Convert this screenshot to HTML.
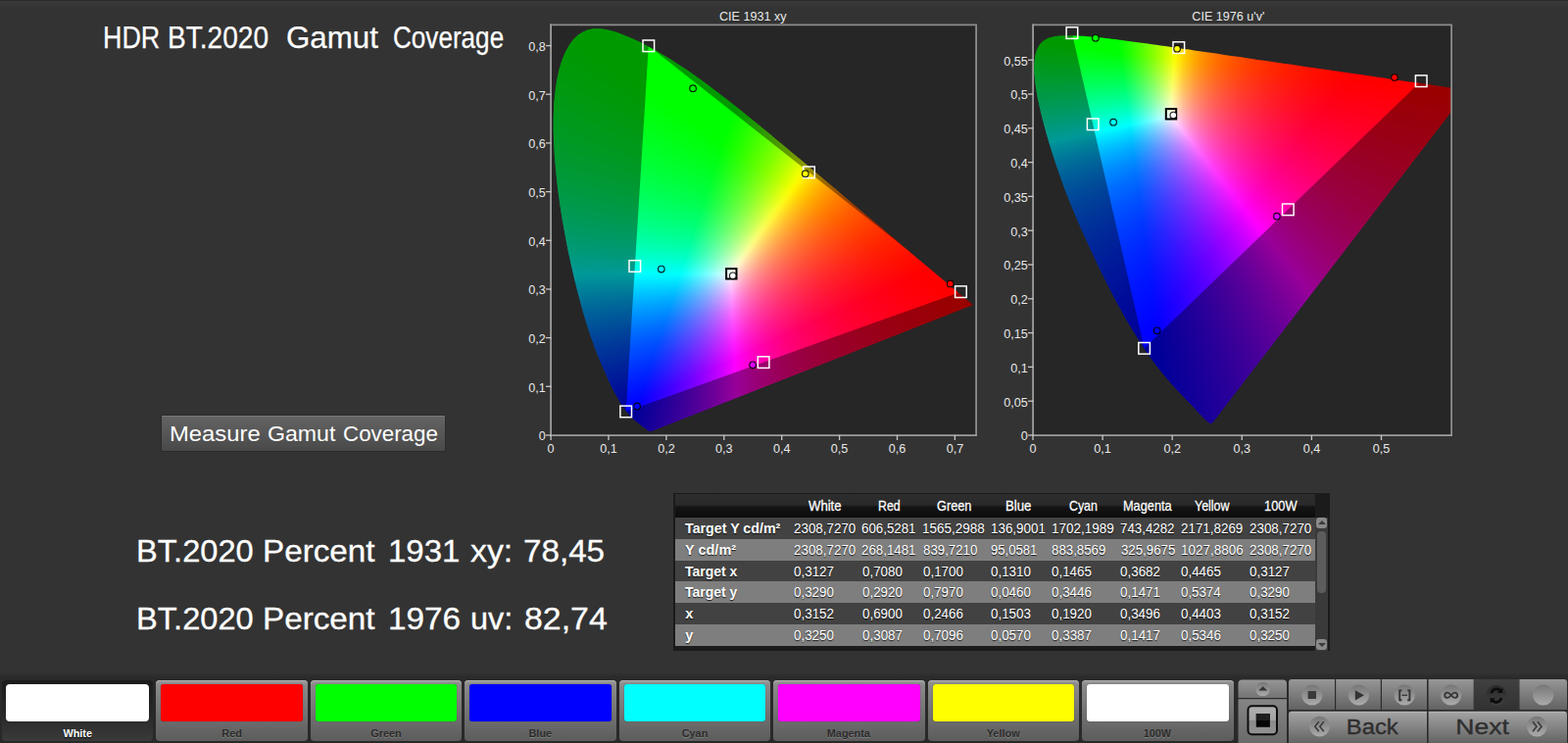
<!DOCTYPE html>
<html><head><meta charset="utf-8"><title>HDR BT.2020 Gamut Coverage</title>
<style>
html,body{margin:0;padding:0;background:#333}
body{width:1600px;height:758px;position:relative;overflow:hidden;font-family:"Liberation Sans",sans-serif;color:#fff}
.t{position:absolute;white-space:pre;line-height:1;transform-origin:0 0}
.sh{text-shadow:0 1px 1px rgba(0,0,0,.8)}
#topline{position:absolute;left:0;top:0;width:1600px;height:7px;background:linear-gradient(#2b2b2b 0,#2b2b2b 1.3px,#383838 1.4px,#363636 6px,#333 7px)}
#c1{position:absolute;left:563px;top:26px;width:433px;height:418px;overflow:hidden;background:#262626}
#c1 .fill{position:absolute;left:0;top:0;width:433px;height:418px;clip-path:polygon(101.4px 414.1px,99.9px 414.1px,98.4px 413.2px,95.8px 411.2px,95.3px 410.9px,94.9px 410.5px,94.4px 410.2px,93.8px 409.8px,93.2px 409.3px,92.6px 408.9px,91.9px 408.4px,91.2px 407.8px,90.4px 407.3px,89.6px 406.7px,88.8px 406.0px,87.9px 405.3px,87.0px 404.6px,86.0px 403.7px,84.9px 402.8px,83.8px 401.9px,82.7px 400.8px,81.5px 399.7px,80.2px 398.4px,78.8px 396.8px,77.3px 395.0px,75.7px 393.0px,74.0px 390.6px,72.2px 387.9px,70.2px 385.0px,68.2px 381.6px,66.0px 377.8px,63.7px 373.6px,61.2px 368.8px,58.6px 363.4px,55.9px 357.4px,53.0px 350.8px,49.8px 343.5px,46.5px 335.5px,43.2px 326.7px,39.7px 317.1px,36.3px 306.7px,32.9px 295.4px,29.5px 283.3px,26.1px 270.4px,22.7px 256.7px,19.4px 242.3px,16.2px 227.3px,13.3px 212.0px,10.5px 196.5px,8.1px 180.8px,6.0px 165.2px,4.3px 149.7px,3.0px 134.6px,2.1px 119.9px,1.7px 105.7px,1.8px 92.0px,2.4px 79.0px,3.6px 66.7px,5.3px 55.2px,7.6px 44.7px,10.5px 35.3px,14.0px 27.0px,17.9px 19.9px,22.3px 14.1px,27.0px 9.6px,32.1px 6.4px,37.5px 4.3px,43.0px 3.3px,48.7px 3.2px,54.5px 3.9px,60.4px 5.2px,66.4px 7.1px,72.3px 9.2px,78.3px 11.7px,84.2px 14.3px,90.1px 17.1px,95.8px 20.0px,101.4px 23.0px,107.0px 26.0px,112.4px 29.2px,117.9px 32.4px,123.2px 35.7px,128.6px 39.2px,133.9px 42.7px,139.3px 46.3px,144.6px 50.0px,149.8px 53.7px,155.1px 57.6px,160.4px 61.5px,165.6px 65.4px,170.9px 69.4px,176.1px 73.4px,181.3px 77.5px,186.5px 81.6px,191.8px 85.8px,197.0px 90.0px,202.2px 94.2px,207.5px 98.5px,212.7px 102.7px,218.0px 107.0px,223.2px 111.3px,228.4px 115.7px,233.6px 120.0px,238.8px 124.3px,244.0px 128.7px,249.2px 133.0px,254.4px 137.3px,259.5px 141.6px,264.6px 145.9px,269.7px 150.2px,274.8px 154.5px,279.8px 158.7px,284.8px 163.0px,289.8px 167.1px,294.7px 171.3px,299.6px 175.4px,304.4px 179.5px,309.1px 183.5px,313.8px 187.4px,318.5px 191.4px,323.0px 195.2px,327.5px 199.0px,332.0px 202.7px,336.3px 206.3px,340.5px 209.9px,344.6px 213.4px,348.6px 216.8px,352.5px 220.1px,356.2px 223.2px,359.8px 226.2px,363.3px 229.1px,366.6px 232.0px,369.9px 234.7px,373.0px 237.4px,376.1px 240.0px,379.0px 242.4px,381.8px 244.7px,384.4px 246.9px,386.9px 249.0px,389.3px 251.0px,391.6px 252.9px,393.7px 254.8px,395.8px 256.5px,397.7px 258.1px,399.5px 259.7px,401.2px 261.1px,402.8px 262.5px,404.4px 263.8px,405.8px 265.0px,407.2px 266.1px,408.5px 267.2px,409.7px 268.2px,410.9px 269.2px,411.9px 270.1px,413.0px 271.0px,414.0px 271.9px,414.9px 272.7px,415.8px 273.4px,416.7px 274.2px,417.5px 274.9px,418.3px 275.6px,419.1px 276.2px,419.8px 276.8px,420.5px 277.4px,424.6px 280.8px,426.9px 282.8px,429.7px 285.1px);background:conic-gradient(from 0deg at 374.22px 253.02px,#ffff00 0deg,#ffff00 64deg,#ff0000 65deg,#ff0000 123deg,#ff00ff 124deg,#ff00ff 245deg,#ff07ff 246deg,#ff0eff 247deg,#ff16ff 248deg,#ff1dff 249deg,#ff25ff 250deg,#ff2dff 251deg,#ff35ff 252deg,#ff3dff 253deg,#ff46ff 254deg,#ff4eff 255deg,#ff57ff 256deg,#ff61ff 257deg,#ff6aff 258deg,#ff74ff 259deg,#ff7fff 260deg,#ff8aff 261deg,#ff95ff 262deg,#ffa0ff 263deg,#ffacff 264deg,#ffb9ff 265deg,#ffc6ff 266deg,#ffd4ff 267deg,#ffe2ff 268deg,#fff2ff 269deg,#fffffd 270deg,#ffffed 271deg,#ffffdf 272deg,#ffffd1 273deg,#ffffc5 274deg,#ffffb9 275deg,#ffffae 276deg,#ffffa3 277deg,#ffff9a 278deg,#ffff90 279deg,#ffff87 280deg,#ffff7f 281deg,#ffff77 282deg,#ffff6f 283deg,#ffff68 284deg,#ffff61 285deg,#ffff5a 286deg,#ffff53 287deg,#ffff4d 288deg,#ffff47 289deg,#ffff41 290deg,#ffff3b 291deg,#ffff36 292deg,#ffff31 293deg,#ffff2c 294deg,#ffff27 295deg,#ffff22 296deg,#ffff1d 297deg,#ffff19 298deg,#ffff14 299deg,#ffff10 300deg,#ffff0c 301deg,#ffff08 302deg,#ffff04 303deg,#ffff00 304deg,#ffff00 360deg),conic-gradient(from 0deg at 175.15px 119.18px,#00ff00 0deg,#00ff00 18deg,#ffff00 19deg,#ffff00 124deg,#ffff02 125deg,#ffff04 126deg,#ffff07 127deg,#ffff09 128deg,#ffff0b 129deg,#ffff0d 130deg,#ffff10 131deg,#ffff12 132deg,#ffff14 133deg,#ffff17 134deg,#ffff19 135deg,#ffff1c 136deg,#ffff1e 137deg,#ffff21 138deg,#ffff23 139deg,#ffff26 140deg,#ffff29 141deg,#ffff2b 142deg,#ffff2e 143deg,#ffff31 144deg,#ffff34 145deg,#ffff37 146deg,#ffff3b 147deg,#ffff3e 148deg,#ffff41 149deg,#ffff45 150deg,#ffff48 151deg,#ffff4c 152deg,#ffff50 153deg,#ffff54 154deg,#ffff58 155deg,#ffff5c 156deg,#ffff60 157deg,#ffff65 158deg,#ffff6a 159deg,#ffff6f 160deg,#ffff74 161deg,#ffff7a 162deg,#ffff7f 163deg,#ffff85 164deg,#ffff8c 165deg,#ffff92 166deg,#ffff99 167deg,#ffffa1 168deg,#ffffa9 169deg,#ffffb1 170deg,#ffffbb 171deg,#ffffc4 172deg,#ffffcf 173deg,#ffffda 174deg,#ffffe6 175deg,#fffff3 176deg,#fdffff 177deg,#eeffff 178deg,#e0ffff 179deg,#d2ffff 180deg,#c5ffff 181deg,#b7ffff 182deg,#abffff 183deg,#9effff 184deg,#91ffff 185deg,#85ffff 186deg,#79ffff 187deg,#6effff 188deg,#62ffff 189deg,#57ffff 190deg,#4cffff 191deg,#41ffff 192deg,#36ffff 193deg,#2bffff 194deg,#21ffff 195deg,#16ffff 196deg,#0cffff 197deg,#02ffff 198deg,#00ffff 199deg,#00ffff 303deg,#00ff00 304deg,#00ff00 360deg),conic-gradient(from 0deg at 87.33px 386.86px,#00ffff 0deg,#00ffff 18deg,#09ffff 19deg,#13ffff 20deg,#1effff 21deg,#29ffff 22deg,#35ffff 23deg,#41ffff 24deg,#4effff 25deg,#5bffff 26deg,#69ffff 27deg,#77ffff 28deg,#86ffff 29deg,#96ffff 30deg,#a7ffff 31deg,#b8ffff 32deg,#cbffff 33deg,#deffff 34deg,#f3ffff 35deg,#fff5ff 36deg,#ffe1ff 37deg,#ffcfff 38deg,#ffbfff 39deg,#ffb0ff 40deg,#ffa2ff 41deg,#ff96ff 42deg,#ff8aff 43deg,#ff7fff 44deg,#ff75ff 45deg,#ff6cff 46deg,#ff63ff 47deg,#ff5bff 48deg,#ff53ff 49deg,#ff4cff 50deg,#ff45ff 51deg,#ff3fff 52deg,#ff38ff 53deg,#ff32ff 54deg,#ff2dff 55deg,#ff27ff 56deg,#ff22ff 57deg,#ff1dff 58deg,#ff19ff 59deg,#ff14ff 60deg,#ff10ff 61deg,#ff0cff 62deg,#ff08ff 63deg,#ff04ff 64deg,#ff00ff 65deg,#ff00ff 198deg,#0000ff 199deg,#0000ff 244deg,#00ffff 245deg,#00ffff 360deg);background-blend-mode:darken,darken,normal}
#c2{position:absolute;left:1055px;top:26px;width:426px;height:418px;overflow:hidden;background:#262626}
#c2 .fill{position:absolute;left:0;top:0;width:426px;height:418px;clip-path:polygon(181.9px 405.7px,178.7px 405.5px,174.3px 401.5px,166.2px 392.9px,164.9px 391.6px,163.5px 390.1px,162.1px 388.6px,160.5px 386.9px,158.8px 385.1px,156.9px 383.2px,155.0px 381.2px,153.0px 379.1px,150.9px 376.9px,148.7px 374.6px,146.4px 372.2px,143.9px 369.5px,141.3px 366.6px,138.6px 363.6px,135.7px 360.3px,132.8px 356.8px,129.8px 353.1px,126.6px 349.1px,123.2px 344.7px,119.5px 339.6px,115.4px 333.8px,111.1px 327.4px,106.6px 320.2px,101.8px 312.5px,96.8px 304.2px,91.6px 295.3px,86.3px 285.7px,80.9px 275.5px,75.3px 264.7px,69.6px 253.3px,63.9px 241.5px,58.2px 229.4px,52.5px 217.1px,46.9px 204.6px,41.5px 192.1px,36.4px 179.6px,31.6px 167.2px,27.2px 155.1px,23.1px 143.2px,19.3px 131.8px,15.9px 120.8px,12.8px 110.4px,10.1px 100.6px,7.8px 91.5px,5.8px 83.0px,4.1px 75.2px,2.8px 68.0px,1.8px 61.5px,1.0px 55.5px,0.5px 50.1px,0.3px 45.1px,0.3px 40.6px,0.6px 36.5px,1.0px 32.7px,1.7px 29.3px,2.6px 26.3px,3.7px 23.6px,5.0px 21.1px,6.4px 19.0px,8.0px 17.2px,9.8px 15.7px,11.7px 14.4px,13.6px 13.4px,15.7px 12.5px,17.9px 11.9px,20.2px 11.4px,22.5px 11.1px,24.9px 10.8px,27.4px 10.6px,29.9px 10.5px,32.4px 10.4px,34.9px 10.4px,37.4px 10.4px,40.0px 10.4px,42.5px 10.5px,45.1px 10.6px,47.6px 10.7px,50.3px 10.8px,52.9px 11.0px,55.6px 11.2px,58.4px 11.4px,61.2px 11.7px,64.1px 11.9px,67.1px 12.2px,70.1px 12.6px,73.1px 12.9px,76.2px 13.3px,79.5px 13.7px,82.7px 14.1px,86.1px 14.5px,89.5px 14.9px,93.1px 15.4px,96.7px 15.9px,100.4px 16.4px,104.3px 16.9px,108.2px 17.4px,112.2px 18.0px,116.3px 18.6px,120.6px 19.2px,124.9px 19.8px,129.3px 20.4px,133.9px 21.1px,138.6px 21.8px,143.4px 22.5px,148.3px 23.2px,153.3px 23.9px,158.5px 24.6px,163.7px 25.4px,169.1px 26.2px,174.6px 27.0px,180.2px 27.8px,185.9px 28.6px,191.7px 29.5px,197.6px 30.4px,203.7px 31.2px,209.8px 32.1px,216.0px 33.0px,222.3px 33.9px,228.6px 34.9px,235.1px 35.8px,241.6px 36.8px,248.1px 37.7px,254.6px 38.7px,261.1px 39.6px,267.4px 40.5px,273.8px 41.5px,280.0px 42.4px,286.3px 43.3px,292.5px 44.2px,298.7px 45.1px,304.8px 46.0px,310.8px 46.8px,316.6px 47.7px,322.2px 48.5px,327.7px 49.3px,333.0px 50.1px,338.1px 50.8px,343.1px 51.5px,348.0px 52.2px,352.6px 52.9px,357.1px 53.6px,361.3px 54.2px,365.4px 54.8px,369.3px 55.4px,373.0px 55.9px,376.6px 56.4px,380.0px 56.9px,383.3px 57.4px,386.4px 57.8px,389.4px 58.3px,392.3px 58.7px,395.1px 59.1px,397.8px 59.5px,400.4px 59.9px,402.9px 60.3px,405.3px 60.6px,407.6px 61.0px,409.8px 61.3px,411.9px 61.6px,414.0px 61.9px,426.4px 63.7px,433.8px 64.7px,442.7px 66.0px);background:conic-gradient(from 0deg at 319.84px 54.68px,#ffff00 0deg,#ffff00 37deg,#ff0000 38deg,#ff0000 96deg,#ff00ff 97deg,#ff00ff 217deg,#ff01ff 218deg,#ff03ff 219deg,#ff06ff 220deg,#ff09ff 221deg,#ff0bff 222deg,#ff0eff 223deg,#ff11ff 224deg,#ff14ff 225deg,#ff17ff 226deg,#ff1bff 227deg,#ff1eff 228deg,#ff21ff 229deg,#ff25ff 230deg,#ff28ff 231deg,#ff2cff 232deg,#ff30ff 233deg,#ff34ff 234deg,#ff38ff 235deg,#ff3cff 236deg,#ff41ff 237deg,#ff46ff 238deg,#ff4bff 239deg,#ff50ff 240deg,#ff55ff 241deg,#ff5bff 242deg,#ff61ff 243deg,#ff67ff 244deg,#ff6dff 245deg,#ff74ff 246deg,#ff7cff 247deg,#ff84ff 248deg,#ff8cff 249deg,#ff95ff 250deg,#ff9fff 251deg,#ffa9ff 252deg,#ffb4ff 253deg,#ffc0ff 254deg,#ffcdff 255deg,#ffdcff 256deg,#ffebff 257deg,#fffdff 258deg,#ffffef 259deg,#ffffde 260deg,#ffffcd 261deg,#ffffbd 262deg,#ffffad 263deg,#ffff9e 264deg,#ffff8f 265deg,#ffff81 266deg,#ffff74 267deg,#ffff66 268deg,#ffff59 269deg,#ffff4d 270deg,#ffff41 271deg,#ffff35 272deg,#ffff29 273deg,#ffff1e 274deg,#ffff13 275deg,#ffff08 276deg,#ffff00 277deg,#ffff00 360deg),conic-gradient(from 0deg at 88.20px 27.22px,#ffff00 0deg,#ffff00 96deg,#ffff01 97deg,#ffff04 98deg,#ffff08 99deg,#ffff0b 100deg,#ffff0f 101deg,#ffff12 102deg,#ffff16 103deg,#ffff19 104deg,#ffff1d 105deg,#ffff21 106deg,#ffff24 107deg,#ffff28 108deg,#ffff2c 109deg,#ffff30 110deg,#ffff34 111deg,#ffff38 112deg,#ffff3d 113deg,#ffff41 114deg,#ffff45 115deg,#ffff4a 116deg,#ffff4e 117deg,#ffff53 118deg,#ffff58 119deg,#ffff5d 120deg,#ffff62 121deg,#ffff67 122deg,#ffff6c 123deg,#ffff72 124deg,#ffff78 125deg,#ffff7e 126deg,#ffff84 127deg,#ffff8a 128deg,#ffff90 129deg,#ffff97 130deg,#ffff9e 131deg,#ffffa5 132deg,#ffffad 133deg,#ffffb5 134deg,#ffffbd 135deg,#ffffc6 136deg,#ffffcf 137deg,#ffffd9 138deg,#ffffe3 139deg,#ffffed 140deg,#fffff8 141deg,#faffff 142deg,#efffff 143deg,#e3ffff 144deg,#d9ffff 145deg,#ceffff 146deg,#c4ffff 147deg,#baffff 148deg,#b1ffff 149deg,#a8ffff 150deg,#9effff 151deg,#96ffff 152deg,#8dffff 153deg,#85ffff 154deg,#7cffff 155deg,#74ffff 156deg,#6cffff 157deg,#65ffff 158deg,#5dffff 159deg,#56ffff 160deg,#4effff 161deg,#47ffff 162deg,#40ffff 163deg,#39ffff 164deg,#32ffff 165deg,#2bffff 166deg,#25ffff 167deg,#1effff 168deg,#18ffff 169deg,#11ffff 170deg,#0bffff 171deg,#04ffff 172deg,#00ffff 173deg,#00ffff 276deg,#00ff00 277deg,#00ff00 352deg,#ffff00 353deg,#ffff00 360deg),conic-gradient(from 0deg at 124.07px 307.73px,#92ffff 0deg,#aaffff 1deg,#c3ffff 2deg,#ddffff 3deg,#f8ffff 4deg,#ffeaff 5deg,#ffd3ff 6deg,#ffbfff 7deg,#ffaeff 8deg,#ff9eff 9deg,#ff90ff 10deg,#ff84ff 11deg,#ff79ff 12deg,#ff6fff 13deg,#ff66ff 14deg,#ff5eff 15deg,#ff56ff 16deg,#ff4fff 17deg,#ff49ff 18deg,#ff43ff 19deg,#ff3dff 20deg,#ff38ff 21deg,#ff33ff 22deg,#ff2fff 23deg,#ff2aff 24deg,#ff26ff 25deg,#ff22ff 26deg,#ff1eff 27deg,#ff1bff 28deg,#ff18ff 29deg,#ff14ff 30deg,#ff11ff 31deg,#ff0fff 32deg,#ff0cff 33deg,#ff09ff 34deg,#ff07ff 35deg,#ff04ff 36deg,#ff02ff 37deg,#ff00ff 38deg,#ff00ff 172deg,#0000ff 173deg,#0000ff 217deg,#00ffff 218deg,#00ffff 352deg,#05ffff 353deg,#17ffff 354deg,#29ffff 355deg,#3dffff 356deg,#51ffff 357deg,#66ffff 358deg,#7bffff 359deg,#92ffff 360deg);background-blend-mode:darken,darken,normal}

.dim{position:absolute;left:0;top:0}
#ov{position:absolute;left:0;top:0}
#ov text{font-family:"Liberation Sans",sans-serif;font-size:12.6px;fill:#e8e8e8}
#btn{position:absolute;left:164px;top:423px;width:291px;height:38px;box-sizing:border-box;border:1px solid #2b2b2b;background:linear-gradient(#646464,#494949);box-shadow:inset 0 1px 0 #787878}

#tbl{position:absolute;left:687px;top:503px;width:670px;height:161px;background:#1b1b1b}
#tbl .hd{position:absolute;left:2px;top:1px;width:653px;height:24px;background:linear-gradient(#2d2d2d 0,#2a2a2a 45%,#141414 55%,#0c0c0c 100%)}
#tbl .ra,#tbl .rb{position:absolute;left:2px;width:653px;height:22px}
#tbl .ra{background:#424242}
#tbl .rb{background:#7e7e7e}
#tbl .sb{position:absolute;left:655px;top:25px;width:13px;height:136px;background:#3a3a3a}
#tbl .up,#tbl .dn{position:absolute;left:1px;width:11px;height:11px;border-radius:3px;background:#8a8a8a}
#tbl .up{top:0}
#tbl .dn{top:124px}
#tbl .up:after,#tbl .dn:after{content:"";position:absolute;left:1.5px;border-left:4px solid transparent;border-right:4px solid transparent}
#tbl .up:after{top:3px;border-bottom:4px solid #3a3a3a}
#tbl .dn:after{top:4px;border-top:4px solid #3a3a3a}
#tbl .th{position:absolute;left:2px;top:14px;width:9px;height:63px;border-radius:4px;background:#5c5c5c}

#barbg{position:absolute;left:0;top:686px;width:1600px;height:72px;background:linear-gradient(#333 0,#2a2a2a 5px,#292929 100%)}
.tile{position:absolute;top:693.7px;width:154.6px;height:62.3px;border-radius:4px;background:linear-gradient(#9a9a9a,#8a8a8a 8%,#6a6a6a 72%,#5c5c5c);box-shadow:inset 0 1px 0 #b0b0b0}
.tile.sel{background:linear-gradient(#1c1c1c,#2a2a2a 60%,#3a3a3a);box-shadow:none}
.tile i{position:absolute;left:5px;top:4.8px;width:144.6px;height:37.6px;border-radius:3px;box-shadow:0 0 1px rgba(0,0,0,.5)}
.tile.sel i{left:4px;top:4.2px;width:146.4px;height:38.6px;border-radius:4px}

</style></head><body>
<div id="topline"></div>
<div id="c1"><div class="fill"><svg class="dim" width="433" height="418"><path d="M-9 -9H442V427H-9Z M417.4 271.7 L98.8 20.8 L75.7 393.9Z" fill="#000" fill-opacity="0.4" fill-rule="evenodd"/></svg></div></div>
<div id="c2"><div class="fill"><svg class="dim" width="426" height="418"><path d="M-9 -9H435V427H-9Z M395.2 56.7 L38.9 7.6 L112.6 329.3Z" fill="#000" fill-opacity="0.4" fill-rule="evenodd"/></svg></div></div>
<svg id="ov" width="1600" height="480" viewBox="0 0 1600 480">
<path d="M561.4 25.3H996.1V444.8" fill="none" stroke="#8c8c8c" stroke-width="1.8"/>
<path d="M562.1 24.4V444.1H997" fill="none" stroke="#9c9c9c" stroke-width="1.8"/>
<path d="M562.1 444v5" stroke="#c8c8c8" stroke-width="1.3"/>
<text x="562.1" y="462" text-anchor="middle">0</text>
<path d="M621.0 444v5" stroke="#c8c8c8" stroke-width="1.3"/>
<text x="621.0" y="462" text-anchor="middle">0,1</text>
<path d="M679.9 444v5" stroke="#c8c8c8" stroke-width="1.3"/>
<text x="679.9" y="462" text-anchor="middle">0,2</text>
<path d="M738.8 444v5" stroke="#c8c8c8" stroke-width="1.3"/>
<text x="738.8" y="462" text-anchor="middle">0,3</text>
<path d="M797.7 444v5" stroke="#c8c8c8" stroke-width="1.3"/>
<text x="797.7" y="462" text-anchor="middle">0,4</text>
<path d="M856.6 444v5" stroke="#c8c8c8" stroke-width="1.3"/>
<text x="856.6" y="462" text-anchor="middle">0,5</text>
<path d="M915.5 444v5" stroke="#c8c8c8" stroke-width="1.3"/>
<text x="915.5" y="462" text-anchor="middle">0,6</text>
<path d="M974.4 444v5" stroke="#c8c8c8" stroke-width="1.3"/>
<text x="974.4" y="462" text-anchor="middle">0,7</text>
<path d="M557 444.0h5.5" stroke="#c8c8c8" stroke-width="1.3"/>
<text x="556.7" y="449.3" text-anchor="end">0</text>
<path d="M557 394.3h5.5" stroke="#c8c8c8" stroke-width="1.3"/>
<text x="556.7" y="399.6" text-anchor="end">0,1</text>
<path d="M557 344.6h5.5" stroke="#c8c8c8" stroke-width="1.3"/>
<text x="556.7" y="349.9" text-anchor="end">0,2</text>
<path d="M557 295.0h5.5" stroke="#c8c8c8" stroke-width="1.3"/>
<text x="556.7" y="300.3" text-anchor="end">0,3</text>
<path d="M557 245.3h5.5" stroke="#c8c8c8" stroke-width="1.3"/>
<text x="556.7" y="250.6" text-anchor="end">0,4</text>
<path d="M557 195.6h5.5" stroke="#c8c8c8" stroke-width="1.3"/>
<text x="556.7" y="200.9" text-anchor="end">0,5</text>
<path d="M557 145.9h5.5" stroke="#c8c8c8" stroke-width="1.3"/>
<text x="556.7" y="151.2" text-anchor="end">0,6</text>
<path d="M557 96.2h5.5" stroke="#c8c8c8" stroke-width="1.3"/>
<text x="556.7" y="101.5" text-anchor="end">0,7</text>
<path d="M557 46.6h5.5" stroke="#c8c8c8" stroke-width="1.3"/>
<text x="556.7" y="51.9" text-anchor="end">0,8</text>
<text x="768.3" y="21.4" text-anchor="middle">CIE 1931 xy</text>
<rect x="741.1" y="274.1" width="10.4" height="10.4" fill="none" stroke="#000" stroke-width="2.0"/>
<rect x="974.6" y="291.9" width="11.6" height="11.6" fill="none" stroke="#fff" stroke-width="1.5"/>
<rect x="656.0" y="41.0" width="11.6" height="11.6" fill="none" stroke="#fff" stroke-width="1.5"/>
<rect x="632.9" y="414.1" width="11.6" height="11.6" fill="none" stroke="#fff" stroke-width="1.5"/>
<rect x="642.0" y="265.7" width="11.6" height="11.6" fill="none" stroke="#fff" stroke-width="1.5"/>
<rect x="773.3" y="363.8" width="11.6" height="11.6" fill="none" stroke="#fff" stroke-width="1.5"/>
<rect x="819.7" y="170.0" width="11.6" height="11.6" fill="none" stroke="#fff" stroke-width="1.5"/>
<circle cx="747.8" cy="281.3" r="3.3" fill="#fff" stroke="#000" stroke-opacity=".88" stroke-width="1.15"/>
<circle cx="969.7" cy="289.4" r="3.3" fill="#f00" stroke="#000" stroke-opacity=".88" stroke-width="1.15"/>
<circle cx="707.1" cy="90.2" r="3.3" fill="#0f0" stroke="#000" stroke-opacity=".88" stroke-width="1.15"/>
<circle cx="650.1" cy="414.4" r="3.3" fill="#00f" stroke="#000" stroke-opacity=".88" stroke-width="1.15"/>
<circle cx="674.8" cy="274.5" r="3.3" fill="#0ff" stroke="#000" stroke-opacity=".88" stroke-width="1.15"/>
<circle cx="768.1" cy="372.3" r="3.3" fill="#d0f" stroke="#000" stroke-opacity=".88" stroke-width="1.15"/>
<circle cx="821.8" cy="177.2" r="3.3" fill="#ff0" stroke="#000" stroke-opacity=".88" stroke-width="1.15"/>
<path d="M1053.4 25.3H1481.1V444.8" fill="none" stroke="#8c8c8c" stroke-width="1.8"/>
<path d="M1054.1 24.4V444.1H1482" fill="none" stroke="#9c9c9c" stroke-width="1.8"/>
<path d="M1054.0 444v5" stroke="#c8c8c8" stroke-width="1.3"/>
<text x="1054.0" y="462" text-anchor="middle">0</text>
<path d="M1125.1 444v5" stroke="#c8c8c8" stroke-width="1.3"/>
<text x="1125.1" y="462" text-anchor="middle">0,1</text>
<path d="M1196.2 444v5" stroke="#c8c8c8" stroke-width="1.3"/>
<text x="1196.2" y="462" text-anchor="middle">0,2</text>
<path d="M1267.3 444v5" stroke="#c8c8c8" stroke-width="1.3"/>
<text x="1267.3" y="462" text-anchor="middle">0,3</text>
<path d="M1338.4 444v5" stroke="#c8c8c8" stroke-width="1.3"/>
<text x="1338.4" y="462" text-anchor="middle">0,4</text>
<path d="M1409.5 444v5" stroke="#c8c8c8" stroke-width="1.3"/>
<text x="1409.5" y="462" text-anchor="middle">0,5</text>
<path d="M1049 444.0h5.5" stroke="#c8c8c8" stroke-width="1.3"/>
<text x="1048.7" y="449.3" text-anchor="end">0</text>
<path d="M1049 409.2h5.5" stroke="#c8c8c8" stroke-width="1.3"/>
<text x="1048.7" y="414.5" text-anchor="end">0,05</text>
<path d="M1049 374.4h5.5" stroke="#c8c8c8" stroke-width="1.3"/>
<text x="1048.7" y="379.7" text-anchor="end">0,1</text>
<path d="M1049 339.6h5.5" stroke="#c8c8c8" stroke-width="1.3"/>
<text x="1048.7" y="344.9" text-anchor="end">0,15</text>
<path d="M1049 304.8h5.5" stroke="#c8c8c8" stroke-width="1.3"/>
<text x="1048.7" y="310.1" text-anchor="end">0,2</text>
<path d="M1049 270.0h5.5" stroke="#c8c8c8" stroke-width="1.3"/>
<text x="1048.7" y="275.3" text-anchor="end">0,25</text>
<path d="M1049 235.2h5.5" stroke="#c8c8c8" stroke-width="1.3"/>
<text x="1048.7" y="240.5" text-anchor="end">0,3</text>
<path d="M1049 200.4h5.5" stroke="#c8c8c8" stroke-width="1.3"/>
<text x="1048.7" y="205.7" text-anchor="end">0,35</text>
<path d="M1049 165.6h5.5" stroke="#c8c8c8" stroke-width="1.3"/>
<text x="1048.7" y="170.9" text-anchor="end">0,4</text>
<path d="M1049 130.8h5.5" stroke="#c8c8c8" stroke-width="1.3"/>
<text x="1048.7" y="136.1" text-anchor="end">0,45</text>
<path d="M1049 96.0h5.5" stroke="#c8c8c8" stroke-width="1.3"/>
<text x="1048.7" y="101.3" text-anchor="end">0,5</text>
<path d="M1049 61.2h5.5" stroke="#c8c8c8" stroke-width="1.3"/>
<text x="1048.7" y="66.5" text-anchor="end">0,55</text>
<text x="1253.4" y="21.4" text-anchor="middle">CIE 1976 u'v'</text>
<rect x="1189.8" y="111.1" width="10.4" height="10.4" fill="none" stroke="#000" stroke-width="2.0"/>
<rect x="1444.4" y="76.9" width="11.6" height="11.6" fill="none" stroke="#fff" stroke-width="1.5"/>
<rect x="1088.1" y="27.8" width="11.6" height="11.6" fill="none" stroke="#fff" stroke-width="1.5"/>
<rect x="1161.8" y="349.5" width="11.6" height="11.6" fill="none" stroke="#fff" stroke-width="1.5"/>
<rect x="1109.4" y="121.0" width="11.6" height="11.6" fill="none" stroke="#fff" stroke-width="1.5"/>
<rect x="1308.5" y="208.0" width="11.6" height="11.6" fill="none" stroke="#fff" stroke-width="1.5"/>
<rect x="1197.0" y="42.8" width="11.6" height="11.6" fill="none" stroke="#fff" stroke-width="1.5"/>
<circle cx="1197.3" cy="117.6" r="3.3" fill="#fff" stroke="#000" stroke-opacity=".88" stroke-width="1.15"/>
<circle cx="1423.0" cy="79.0" r="3.3" fill="#f00" stroke="#000" stroke-opacity=".88" stroke-width="1.15"/>
<circle cx="1117.9" cy="38.8" r="3.3" fill="#0f0" stroke="#000" stroke-opacity=".88" stroke-width="1.15"/>
<circle cx="1180.7" cy="337.3" r="3.3" fill="#00f" stroke="#000" stroke-opacity=".88" stroke-width="1.15"/>
<circle cx="1136.1" cy="124.7" r="3.3" fill="#0ff" stroke="#000" stroke-opacity=".88" stroke-width="1.15"/>
<circle cx="1302.9" cy="220.7" r="3.3" fill="#d0f" stroke="#000" stroke-opacity=".88" stroke-width="1.15"/>
<circle cx="1201.1" cy="49.7" r="3.3" fill="#ff0" stroke="#000" stroke-opacity=".88" stroke-width="1.15"/>
</svg>
<!--LEFT-->
<span class="t" style="left:104.78px;top:22.96px;font-size:31px;transform:scaleX(0.8680);-webkit-text-stroke:0.25px #fff;">HDR</span>
<span class="t" style="left:171.08px;top:22.96px;font-size:31px;transform:scaleX(0.9062);-webkit-text-stroke:0.25px #fff;">BT.2020</span>
<span class="t" style="left:291.83px;top:22.96px;font-size:31px;transform:scaleX(1.0101);-webkit-text-stroke:0.25px #fff;">Gamut</span>
<span class="t" style="left:401.09px;top:22.96px;font-size:31px;transform:scaleX(0.8418);-webkit-text-stroke:0.25px #fff;">Coverage</span>
<div id="btn"></div>
<span class="t" style="left:172.88px;top:432.17px;font-size:22.25px;transform:scaleX(1.0702);">Measure</span>
<span class="t" style="left:272.91px;top:432.17px;font-size:22.25px;transform:scaleX(1.0388);">Gamut</span>
<span class="t" style="left:349.92px;top:432.17px;font-size:22.25px;transform:scaleX(1.0042);">Coverage</span>
<span class="t" style="left:138.57px;top:546.21px;font-size:32px;transform:scaleX(1.0200);-webkit-text-stroke:0.3px #fff;">BT.2020</span>
<span class="t" style="left:268.22px;top:546.21px;font-size:32px;transform:scaleX(1.0391);-webkit-text-stroke:0.3px #fff;">Percent</span>
<span class="t" style="left:395.90px;top:546.21px;font-size:32px;transform:scaleX(1.0305);-webkit-text-stroke:0.3px #fff;">1931</span>
<span class="t" style="left:480.09px;top:546.21px;font-size:32px;transform:scaleX(1.0570);-webkit-text-stroke:0.3px #fff;">xy:</span>
<span class="t" style="left:533.96px;top:546.21px;font-size:32px;transform:scaleX(1.0373);-webkit-text-stroke:0.3px #fff;">78,45</span>
<span class="t" style="left:138.57px;top:615.41px;font-size:32px;transform:scaleX(1.0200);-webkit-text-stroke:0.3px #fff;">BT.2020</span>
<span class="t" style="left:268.22px;top:615.41px;font-size:32px;transform:scaleX(1.0391);-webkit-text-stroke:0.3px #fff;">Percent</span>
<span class="t" style="left:395.88px;top:615.41px;font-size:32px;transform:scaleX(1.0415);-webkit-text-stroke:0.3px #fff;">1976</span>
<span class="t" style="left:479.92px;top:615.41px;font-size:32px;transform:scaleX(1.0146);-webkit-text-stroke:0.3px #fff;">uv:</span>
<span class="t" style="left:534.89px;top:615.41px;font-size:32px;transform:scaleX(1.0585);-webkit-text-stroke:0.3px #fff;">82,74</span>
<!--TABLE-->
<div id="tbl"><div class="hd"></div>
<div class="ra" style="top:24.80px;height:23px"></div>
<div class="rb" style="top:46.65px;height:23px"></div>
<div class="ra" style="top:68.50px;height:23px"></div>
<div class="rb" style="top:90.35px;height:23px"></div>
<div class="ra" style="top:112.20px;height:23px"></div>
<div class="rb" style="top:134.05px;height:22px"></div>
<div class="sb"><div class="up"></div><div class="th"></div><div class="dn"></div></div></div>
<span class="t sh" style="left:824.85px;top:508.54px;font-size:14.6px;transform:scaleX(0.8986);-webkit-text-stroke:0.3px #fff;">White</span>
<span class="t sh" style="left:895.90px;top:508.54px;font-size:14.6px;transform:scaleX(0.8447);-webkit-text-stroke:0.3px #fff;">Red</span>
<span class="t sh" style="left:955.80px;top:508.54px;font-size:14.6px;transform:scaleX(0.8723);-webkit-text-stroke:0.3px #fff;">Green</span>
<span class="t sh" style="left:1025.63px;top:508.54px;font-size:14.6px;transform:scaleX(0.9023);-webkit-text-stroke:0.3px #fff;">Blue</span>
<span class="t sh" style="left:1090.82px;top:508.54px;font-size:14.6px;transform:scaleX(0.8465);-webkit-text-stroke:0.3px #fff;">Cyan</span>
<span class="t sh" style="left:1145.97px;top:508.54px;font-size:14.6px;transform:scaleX(0.8740);-webkit-text-stroke:0.3px #fff;">Magenta</span>
<span class="t sh" style="left:1219.14px;top:508.54px;font-size:14.6px;transform:scaleX(0.8509);-webkit-text-stroke:0.3px #fff;">Yellow</span>
<span class="t sh" style="left:1289.67px;top:508.54px;font-size:14.6px;transform:scaleX(0.8784);-webkit-text-stroke:0.3px #fff;">100W</span>
<span class="t sh" style="left:699.23px;top:531.84px;font-size:14.6px;font-weight:bold;transform:scaleX(0.9752);">Target Y cd/m²</span>
<span class="t sh" style="left:809.58px;top:531.84px;font-size:14.6px;transform:scaleX(0.9173);">2308,7270</span>
<span class="t sh" style="left:879.48px;top:531.84px;font-size:14.6px;transform:scaleX(0.9116);">606,5281</span>
<span class="t sh" style="left:941.33px;top:531.84px;font-size:14.6px;transform:scaleX(0.9224);">1565,2988</span>
<span class="t sh" style="left:1011.03px;top:531.84px;font-size:14.6px;transform:scaleX(0.9174);">136,9001</span>
<span class="t sh" style="left:1072.83px;top:531.84px;font-size:14.6px;transform:scaleX(0.9224);">1702,1989</span>
<span class="t sh" style="left:1143.38px;top:531.84px;font-size:14.6px;transform:scaleX(0.9116);">743,4282</span>
<span class="t sh" style="left:1204.98px;top:531.84px;font-size:14.6px;transform:scaleX(0.9173);">2171,8269</span>
<span class="t sh" style="left:1274.88px;top:531.84px;font-size:14.6px;transform:scaleX(0.9173);">2308,7270</span>
<span class="t sh" style="left:699.10px;top:553.69px;font-size:14.6px;font-weight:bold;transform:scaleX(0.9937);">Y cd/m²</span>
<span class="t sh" style="left:809.58px;top:553.69px;font-size:14.6px;transform:scaleX(0.9173);">2308,7270</span>
<span class="t sh" style="left:879.48px;top:553.69px;font-size:14.6px;transform:scaleX(0.9116);">268,1481</span>
<span class="t sh" style="left:941.68px;top:553.69px;font-size:14.6px;transform:scaleX(0.9097);">839,7210</span>
<span class="t sh" style="left:1011.39px;top:553.69px;font-size:14.6px;transform:scaleX(0.8978);">95,0581</span>
<span class="t sh" style="left:1073.18px;top:553.69px;font-size:14.6px;transform:scaleX(0.9097);">883,8569</span>
<span class="t sh" style="left:1143.50px;top:553.69px;font-size:14.6px;transform:scaleX(0.9078);">325,9675</span>
<span class="t sh" style="left:1204.63px;top:553.69px;font-size:14.6px;transform:scaleX(0.9224);">1027,8806</span>
<span class="t sh" style="left:1274.88px;top:553.69px;font-size:14.6px;transform:scaleX(0.9173);">2308,7270</span>
<span class="t sh" style="left:699.23px;top:575.54px;font-size:14.6px;font-weight:bold;transform:scaleX(0.9578);">Target x</span>
<span class="t sh" style="left:809.69px;top:575.54px;font-size:14.6px;transform:scaleX(0.9183);">0,3127</span>
<span class="t sh" style="left:879.59px;top:575.54px;font-size:14.6px;transform:scaleX(0.9156);">0,7080</span>
<span class="t sh" style="left:941.79px;top:575.54px;font-size:14.6px;transform:scaleX(0.9156);">0,1700</span>
<span class="t sh" style="left:1011.49px;top:575.54px;font-size:14.6px;transform:scaleX(0.9156);">0,1310</span>
<span class="t sh" style="left:1073.29px;top:575.54px;font-size:14.6px;transform:scaleX(0.9156);">0,1465</span>
<span class="t sh" style="left:1143.49px;top:575.54px;font-size:14.6px;transform:scaleX(0.9183);">0,3682</span>
<span class="t sh" style="left:1205.09px;top:575.54px;font-size:14.6px;transform:scaleX(0.9156);">0,4465</span>
<span class="t sh" style="left:1274.99px;top:575.54px;font-size:14.6px;transform:scaleX(0.9183);">0,3127</span>
<span class="t sh" style="left:699.23px;top:597.39px;font-size:14.6px;font-weight:bold;transform:scaleX(0.9578);">Target y</span>
<span class="t sh" style="left:809.69px;top:597.39px;font-size:14.6px;transform:scaleX(0.9156);">0,3290</span>
<span class="t sh" style="left:879.59px;top:597.39px;font-size:14.6px;transform:scaleX(0.9156);">0,2920</span>
<span class="t sh" style="left:941.79px;top:597.39px;font-size:14.6px;transform:scaleX(0.9156);">0,7970</span>
<span class="t sh" style="left:1011.49px;top:597.39px;font-size:14.6px;transform:scaleX(0.9156);">0,0460</span>
<span class="t sh" style="left:1073.29px;top:597.39px;font-size:14.6px;transform:scaleX(0.9156);">0,3446</span>
<span class="t sh" style="left:1143.49px;top:597.39px;font-size:14.6px;transform:scaleX(0.9183);">0,1471</span>
<span class="t sh" style="left:1205.09px;top:597.39px;font-size:14.6px;transform:scaleX(0.9103);">0,5374</span>
<span class="t sh" style="left:1274.99px;top:597.39px;font-size:14.6px;transform:scaleX(0.9156);">0,3290</span>
<span class="t sh" style="left:699.35px;top:619.24px;font-size:14.6px;font-weight:bold;">x</span>
<span class="t sh" style="left:809.69px;top:619.24px;font-size:14.6px;transform:scaleX(0.9183);">0,3152</span>
<span class="t sh" style="left:879.59px;top:619.24px;font-size:14.6px;transform:scaleX(0.9156);">0,6900</span>
<span class="t sh" style="left:941.79px;top:619.24px;font-size:14.6px;transform:scaleX(0.9156);">0,2466</span>
<span class="t sh" style="left:1011.49px;top:619.24px;font-size:14.6px;transform:scaleX(0.9156);">0,1503</span>
<span class="t sh" style="left:1073.29px;top:619.24px;font-size:14.6px;transform:scaleX(0.9156);">0,1920</span>
<span class="t sh" style="left:1143.49px;top:619.24px;font-size:14.6px;transform:scaleX(0.9156);">0,3496</span>
<span class="t sh" style="left:1205.09px;top:619.24px;font-size:14.6px;transform:scaleX(0.9156);">0,4403</span>
<span class="t sh" style="left:1274.99px;top:619.24px;font-size:14.6px;transform:scaleX(0.9183);">0,3152</span>
<span class="t sh" style="left:699.35px;top:641.09px;font-size:14.6px;font-weight:bold;">y</span>
<span class="t sh" style="left:809.69px;top:641.09px;font-size:14.6px;transform:scaleX(0.9156);">0,3250</span>
<span class="t sh" style="left:879.59px;top:641.09px;font-size:14.6px;transform:scaleX(0.9183);">0,3087</span>
<span class="t sh" style="left:941.79px;top:641.09px;font-size:14.6px;transform:scaleX(0.9156);">0,7096</span>
<span class="t sh" style="left:1011.49px;top:641.09px;font-size:14.6px;transform:scaleX(0.9156);">0,0570</span>
<span class="t sh" style="left:1073.29px;top:641.09px;font-size:14.6px;transform:scaleX(0.9183);">0,3387</span>
<span class="t sh" style="left:1143.49px;top:641.09px;font-size:14.6px;transform:scaleX(0.9183);">0,1417</span>
<span class="t sh" style="left:1205.09px;top:641.09px;font-size:14.6px;transform:scaleX(0.9156);">0,5346</span>
<span class="t sh" style="left:1274.99px;top:641.09px;font-size:14.6px;transform:scaleX(0.9156);">0,3250</span>
<!--BAR-->
<div id="barbg"></div>
<div class="tile sel" style="left:1.9px"><i style="background:#fff"></i></div>
<span class="t" style="left:64.39px;top:742.77px;font-size:10.9px;font-weight:bold;text-shadow:0 1px 1px #000;">White</span>
<div class="tile" style="left:159.3px"><i style="background:#f00"></i></div>
<span class="t" style="left:226.34px;top:742.77px;font-size:10.9px;font-weight:bold;color:#2b2b2b;text-shadow:0 1px 0 rgba(255,255,255,.22);">Red</span>
<div class="tile" style="left:316.8px"><i style="background:#0f0"></i></div>
<span class="t" style="left:378.29px;top:742.77px;font-size:10.9px;font-weight:bold;color:#2b2b2b;text-shadow:0 1px 0 rgba(255,255,255,.22);">Green</span>
<div class="tile" style="left:474.2px"><i style="background:#00f"></i></div>
<span class="t" style="left:539.49px;top:742.77px;font-size:10.9px;font-weight:bold;color:#2b2b2b;text-shadow:0 1px 0 rgba(255,255,255,.22);">Blue</span>
<div class="tile" style="left:631.7px"><i style="background:#0ff"></i></div>
<span class="t" style="left:695.69px;top:742.77px;font-size:10.9px;font-weight:bold;color:#2b2b2b;text-shadow:0 1px 0 rgba(255,255,255,.22);">Cyan</span>
<div class="tile" style="left:789.1px"><i style="background:#f0f"></i></div>
<span class="t" style="left:843.76px;top:742.77px;font-size:10.9px;font-weight:bold;color:#2b2b2b;text-shadow:0 1px 0 rgba(255,255,255,.22);">Magenta</span>
<div class="tile" style="left:946.6px"><i style="background:#ff0"></i></div>
<span class="t" style="left:1006.71px;top:742.77px;font-size:10.9px;font-weight:bold;color:#2b2b2b;text-shadow:0 1px 0 rgba(255,255,255,.22);">Yellow</span>
<div class="tile" style="left:1104.0px"><i style="background:#fff"></i></div>
<span class="t" style="left:1166.66px;top:742.77px;font-size:10.9px;font-weight:bold;color:#2b2b2b;text-shadow:0 1px 0 rgba(255,255,255,.22);">100W</span>
<svg id="ctrl" width="340" height="68" viewBox="1260 690 340 68" style="position:absolute;left:1260px;top:690px">
<defs>
<linearGradient id="gTop" x1="0" y1="0" x2="0" y2="1"><stop offset="0" stop-color="#979797"/><stop offset="1" stop-color="#626262"/></linearGradient>
<linearGradient id="gBot" x1="0" y1="0" x2="0" y2="1"><stop offset="0" stop-color="#bdbdbd"/><stop offset="0.06" stop-color="#a0a0a0"/><stop offset="1" stop-color="#646464"/></linearGradient>
<linearGradient id="gDark" x1="0" y1="0" x2="0" y2="1"><stop offset="0" stop-color="#404040"/><stop offset="1" stop-color="#323232"/></linearGradient>
<linearGradient id="gCirc" x1="0" y1="0" x2="0" y2="1"><stop offset="0" stop-color="#767676"/><stop offset="1" stop-color="#ababab"/></linearGradient>
<linearGradient id="gCircD" x1="0" y1="0" x2="0" y2="1"><stop offset="0" stop-color="#2a2a2a"/><stop offset="1" stop-color="#3e3e3e"/></linearGradient>
<linearGradient id="gPat" x1="0" y1="0" x2="0" y2="1"><stop offset="0" stop-color="#969696"/><stop offset="1" stop-color="#747474"/></linearGradient>
<linearGradient id="gPat2" x1="0" y1="0" x2="0" y2="1"><stop offset="0" stop-color="#858585"/><stop offset="1" stop-color="#6a6a6a"/></linearGradient>
<linearGradient id="gSq" x1="0" y1="0" x2="0" y2="1"><stop offset="0" stop-color="#b0b0b0"/><stop offset="0.5" stop-color="#a2a2a2"/><stop offset="0.5" stop-color="#8a8a8a"/><stop offset="1" stop-color="#929292"/></linearGradient>
</defs>
<rect x="1262" y="692" width="338" height="66" fill="#2a2a2a"/>
<!-- pattern block -->
<path d="M1263.5 712V697.5a4 4 0 0 1 4-4H1309a4 4 0 0 1 4 4V712Z" fill="url(#gPat)"/>
<rect x="1263.5" y="713.2" width="49.5" height="45" fill="url(#gPat2)"/>
<circle cx="1288.6" cy="703" r="7.3" fill="url(#gCirc)"/>
<path d="M1284.2 704.6L1288.7 700.2L1293.2 704.6Z" fill="#333"/>
<rect x="1273.5" y="720.3" width="29.5" height="29" rx="4" fill="url(#gSq)" stroke="#0c0c0c" stroke-width="2"/>
<rect x="1281.8" y="728" width="14.1" height="13.8" fill="#050505"/>
<rect x="1281.8" y="728" width="14.1" height="7" fill="#1e1e1e"/>
<!-- top row -->
<path d="M1315 724V696a3 3 0 0 1 3-3H1362V724Z" fill="url(#gTop)"/>
<rect x="1363.2" y="693" width="45.6" height="31" fill="url(#gTop)"/>
<rect x="1410" y="693" width="46" height="31" fill="url(#gTop)"/>
<rect x="1457.6" y="693" width="46.2" height="31" fill="url(#gTop)"/>
<rect x="1503.8" y="693" width="46.7" height="31" fill="url(#gDark)"/>
<path d="M1550.5 693H1596a3 3 0 0 1 3 3V724H1550.5Z" fill="url(#gTop)"/>
<!-- bottom row -->
<path d="M1315 758V728.8a3 3 0 0 1 3-3H1456V758Z" fill="url(#gBot)"/>
<path d="M1457.6 725.8H1596a3 3 0 0 1 3 3V758H1457.6Z" fill="url(#gBot)"/>
<!-- circles -->
<g fill="url(#gCirc)">
<circle cx="1338.9" cy="709" r="10.6"/><circle cx="1386.5" cy="709" r="10.6"/><circle cx="1433.3" cy="709" r="10.6"/>
<circle cx="1480.7" cy="709" r="10.6"/><circle cx="1574.7" cy="709" r="10.6"/>
<circle cx="1346.5" cy="741.2" r="10.4"/><circle cx="1568.3" cy="741.2" r="10.4"/>
</g>
<circle cx="1526.9" cy="709.5" r="10.6" fill="url(#gCircD)"/>
<!-- icons -->
<rect x="1334.6" y="705" width="8.4" height="8" fill="#3a3a3a"/>
<path d="M1382.8 704.2L1392 709.3L1382.8 714.5Z" fill="#333"/>
<g fill="none" stroke="#353535" stroke-width="1.9">
<path d="M1430.4 704.4H1428.2V714.2H1430.4M1436.2 704.4H1438.4V714.2H1436.2"/>
<path d="M1430.6 709.3H1436" stroke-width="1.3"/>
<path d="M1480.7 709.3c-1.5-2-2.700-2.600-3.900-2.600a2.600 2.600 0 0 0 0 5.200c1.200 0 2.400-.6 3.900-2.600c1.500-2 2.700-2.600 3.900-2.600a2.600 2.600 0 0 1 0 5.200c-1.200 0-2.400-.6-3.900-2.600z" stroke-width="1.8"/>
</g>
<g fill="none" stroke="#0c0c0c" stroke-width="2.7">
<path d="M1521.800 707.200a5.400 5.400 0 0 1 9.400-2.400"/><path d="M1532 712a5.400 5.400 0 0 1-9.400 2.400"/>
</g>
<path d="M1533.200 701.600v5.400h-5.400Z M1520.600 717.600v-5.400h5.400Z" fill="#0c0c0c"/>
<g fill="none" stroke="#3a3a3a" stroke-width="1.6">
<path d="M1345.800 736.200L1341.800 741.200L1345.800 746.200M1350.800 736.200L1346.800 741.200L1350.800 746.200"/>
<path d="M1564 736.200L1568 741.200L1564 746.200M1569 736.200L1573 741.200L1569 746.200"/>
</g>
<g font-family="'Liberation Sans',sans-serif" font-size="21.5" fill="#2e2e2e" stroke="#2e2e2e" stroke-width="0.35">
<text x="1373.800" y="749.300" textLength="53" lengthAdjust="spacingAndGlyphs">Back</text>
<text x="1485.300" y="749.300" textLength="54.500" lengthAdjust="spacingAndGlyphs">Next</text>
</g>
</svg>

</body></html>
